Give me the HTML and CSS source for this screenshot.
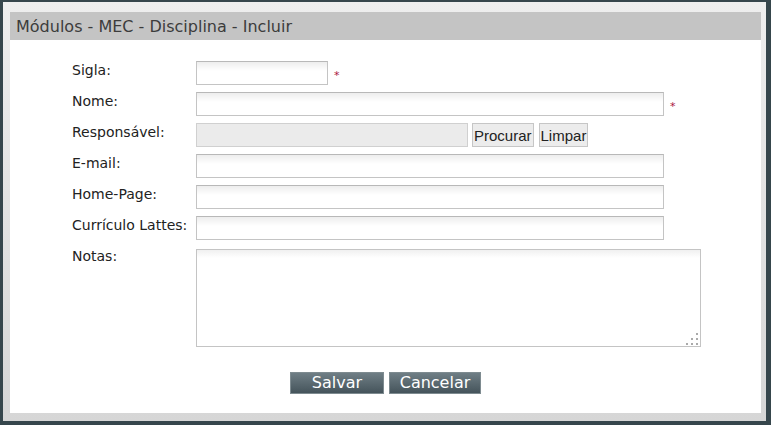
FILE: index.html
```html
<!DOCTYPE html>
<html>
  <head>
    <title>Módulos - MEC - Disciplina - Incluir</title>
    <meta charset="utf-8">
    <link rel="stylesheet" href="styles.css">
  </head>
<body>
  <div class="window">
    <div class="panel">
      <div class="title">Módulos - MEC - Disciplina - Incluir</div>
      <form class="form">
        <div class="row">
          <label class="lbl" for="sigla">Sigla:</label>
          <input type="text" id="sigla" class="txt txt_small" />
          <span class="req">*</span>
        </div>
        <div class="row">
          <label class="lbl" for="nome">Nome:</label>
          <input type="text" id="nome" class="txt" />
          <span class="req">*</span>
        </div>
        <div class="row">
          <label class="lbl" for="resp">Responsável:</label>
          <input type="text" id="resp" class="txt txt_ro" readonly />
          <input type="button" class="btn_small" value="Procurar" />
          <input type="button" class="btn_small" value="Limpar" />
        </div>
        <div class="row">
          <label class="lbl" for="email">E-mail:</label>
          <input type="text" id="email" class="txt" />
        </div>
        <div class="row">
          <label class="lbl" for="home">Home-Page:</label>
          <input type="text" id="home" class="txt" />
        </div>
        <div class="row">
          <label class="lbl" for="lattes">Currículo Lattes:</label>
          <input type="text" id="lattes" class="txt" />
        </div>
        <div class="row row_notes">
          <label class="lbl" for="notas">Notas:</label>
          <div class="area_wrap">
            <textarea id="notas" class="area"></textarea>
            <svg class="grip" width="14" height="14" viewBox="0 0 14 14">
              <rect x="11" y="1" width="2" height="2" fill="#aaa"/>
              <rect x="6" y="6" width="2" height="2" fill="#aaa"/>
              <rect x="11" y="6" width="2" height="2" fill="#aaa"/>
              <rect x="1" y="11" width="2" height="2" fill="#aaa"/>
              <rect x="6" y="11" width="2" height="2" fill="#aaa"/>
              <rect x="11" y="11" width="2" height="2" fill="#aaa"/>
            </svg>
          </div>
        </div>
        <div class="actions">
          <input type="button" class="btn" value="Salvar" />
          <input type="button" class="btn" value="Cancelar" />
        </div>
      </form>
    </div>
  </div>
</body>
</html>
```

FILE: styles.css
```css
* { margin: 0; padding: 0; box-sizing: border-box; }
html, body { height: 100%; }
body { background: #36464c; font-family: "DejaVu Sans", Verdana, sans-serif; padding: 2px 5px 4px 3px; }

.window { height: 419px; background: linear-gradient(#eeeeee, #d6d6d6); padding: 10px 5px 8px 7px; }
.panel { height: 401px; background: #fff; }
.title { height: 28px; background: #c4c4c4; color: #3c3c3c; font-size: 16px; line-height: 18px; padding: 6px 6px 4px 6px; }

.form { padding: 21px 0 0 62px; }
.row { display: flex; align-items: flex-start; height: 24px; margin-bottom: 7px; }
.lbl { width: 124px; font-size: 14px; line-height: 16px; padding-top: 1px; color: #222; white-space: nowrap; }

.txt { width: 468px; height: 24px; border: 1px solid #c4c4c4; border-top-color: #b8b8b8; background: linear-gradient(#ededed, #fff 9px); font-family: "DejaVu Sans", sans-serif; font-size: 13px; padding: 2px 4px; }
.txt_small { width: 132px; }
.txt_ro { width: 272px; background: #ebebeb; border-color: #d0d0d0; }
.req { color: #a8163e; font-size: 11px; margin: 10px 0 0 6px; line-height: 10px; }

.btn_small { height: 24px; margin-left: 4px; background: #ececec; border: 1px solid #c6c6c6; color: #222; font-family: "Liberation Sans", Arial, sans-serif; font-size: 15px; padding: 0 1px; }
.btn_small + .btn_small { margin-left: 5px; }

.row_notes { height: 100px; }
.area_wrap { position: relative; width: 505px; height: 98px; margin-top: 2px; }
.area { display: block; width: 505px; height: 98px; border: 1px solid #c4c4c4; background: linear-gradient(#f0f0f0, #fff 8px); resize: none; }
.grip { position: absolute; right: 2px; bottom: 1px; }

.actions { display: flex; justify-content: center; gap: 5px; margin: 25px 0 0 -62px; }
.btn { height: 22px; border: 1px solid #7e8b90; background: linear-gradient(#6f7e85, #45545b); color: #fff; font-family: "DejaVu Sans", Verdana, sans-serif; font-size: 16px; line-height: 18px; }
.btn:first-child { width: 94px; }
.btn:last-child { width: 92px; }
```
